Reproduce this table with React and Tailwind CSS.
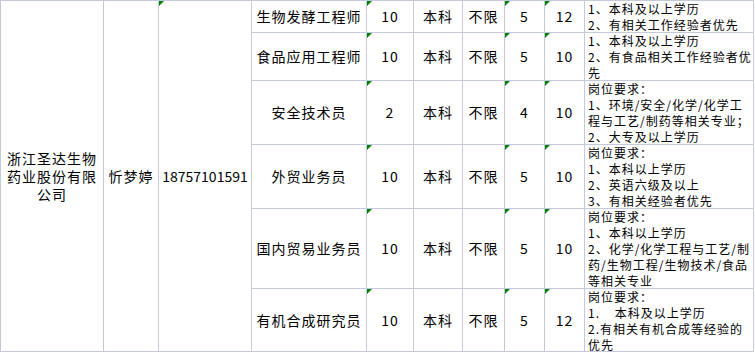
import React from "react";

const rows = [
    { job: "生物发酵工程师", num: "10", edu: "本科", limit: "不限", a: "5", b: "12", desc: ["1、本科及以上学历", "2、有相关工作经验者优先"] },
    { job: "食品应用工程师", num: "10", edu: "本科", limit: "不限", a: "5", b: "10", desc: ["1、本科及以上学历", "2、有食品相关工作经验者优先"] },
    { job: "安全技术员", num: "2", edu: "本科", limit: "不限", a: "4", b: "10", desc: ["岗位要求：", "1、环境/安全/化学/化学工程与工艺/制药等相关专业；", "2、大专及以上学历"] },
    { job: "外贸业务员", num: "10", edu: "本科", limit: "不限", a: "5", b: "10", desc: ["岗位要求：", "1、本科以上学历", "2、英语六级及以上", "3、有相关经验者优先"] },
    { job: "国内贸易业务员", num: "10", edu: "本科", limit: "不限", a: "5", b: "10", desc: ["岗位要求：", "1、本科以上学历", "2、化学/化学工程与工艺/制药/生物工程/生物技术/食品等相关专业"] },
    { job: "有机合成研究员", num: "10", edu: "本科", limit: "不限", a: "5", b: "12", desc: ["岗位要求：", "1.    本科及以上学历", "2.有相关有机合成等经验的优先"] },
];

// little green "number stored as text" marker
const Flag = () => (
    <svg className="absolute left-0 top-0" width="5" height="5" viewBox="0 0 5 5">
        <polygon points="0,0 5,0 0,5" fill="#008000" />
    </svg>
);

const Cell = ({ children, flag, className = "" }) => (
    <div className={`relative bg-white flex items-center justify-center text-center text-[14px] tracking-[1px] ${className}`}>
        {flag && <Flag />}
        {children}
    </div>
);

const App = () => {
    return (
        <div className="w-[755px] h-[353px] bg-white overflow-hidden text-black font-['Noto_Sans_CJK_SC',sans-serif]">
            <div className="grid w-[754px] grid-cols-[102px_54px_92px_114px_46px_48px_41px_39px_39px_168px] grid-rows-[31px_47px_63px_63px_79px_62px] gap-px p-px bg-[#c4c9db]">
                <Cell className="row-span-6 leading-[18px] px-1">浙江圣达生物药业股份有限公司</Cell>
                <Cell className="row-span-6">忻梦婷</Cell>
                <Cell className="row-span-6 tracking-normal" flag>18757101591</Cell>
                {rows.map((r, i) => (
                    <React.Fragment key={i}>
                        <Cell>{r.job}</Cell>
                        <Cell flag>{r.num}</Cell>
                        <Cell>{r.edu}</Cell>
                        <Cell>{r.limit}</Cell>
                        <Cell flag>{r.a}</Cell>
                        <Cell flag>{r.b}</Cell>
                        <div className="bg-white pl-[3px] text-[12px] leading-[16px] tracking-[1px]">
                            {r.desc.map((d, j) => (
                                <div key={j} className="whitespace-pre-wrap">{d}</div>
                            ))}
                        </div>
                    </React.Fragment>
                ))}
            </div>
        </div>
    );
};

export default App;
